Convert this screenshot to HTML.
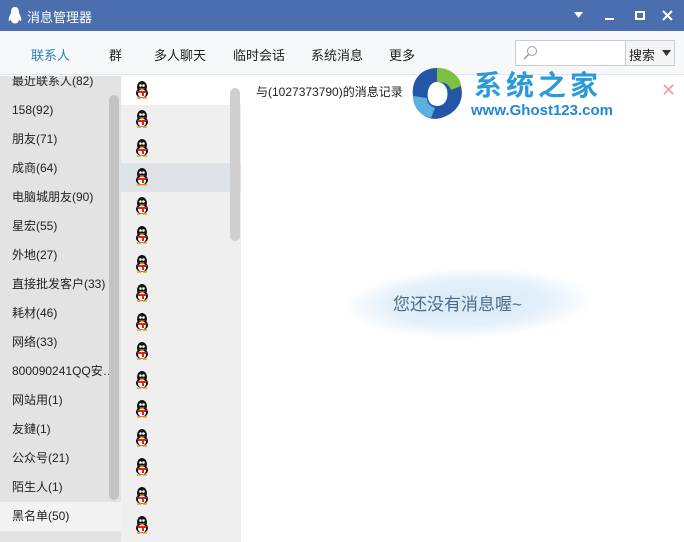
<!DOCTYPE html>
<html><head><meta charset="utf-8"><style>
*{margin:0;padding:0;box-sizing:border-box}
body{width:684px;height:542px;overflow:hidden;background:#fff;font-family:"Liberation Sans","Noto Sans CJK SC",sans-serif;font-size:12px;color:#222;position:relative}
.abs{position:absolute}
#title{left:0;top:0;width:684px;height:31px;background:#4b6eaf;color:#fff}
#tb{left:0;top:31px;width:684px;height:44px;background:#f7f8fa;border-bottom:1px solid #e2e4e8}
.tab{position:absolute;top:45px;font-size:13px;color:#222}
#left{left:0;top:76px;width:121px;height:466px;background:#e3e3e3;overflow:hidden}
.lr{position:absolute;left:0;width:121px;height:29px;line-height:29px;padding-left:12px;padding-right:4px;font-size:12px;white-space:nowrap;overflow:hidden;text-overflow:ellipsis}
#mid{left:121px;top:76px;width:120px;height:466px;background:#efefef;overflow:hidden}
.mr{position:absolute;left:0;width:120px;height:29px}
</style></head><body>
<div id="title" class="abs">
 <svg class="abs" style="left:8px;top:7px" width="14" height="17" viewBox="0 0 14 17"><path d="M7 0C3.5 0 3 3 3 6 1.5 9 0 12 1 14 2 14 2.5 13 3 12.5 3 15 5 16.5 7 16.5 9 16.5 11 15 11 12.5 11.5 13 12 14 13 14 14 12 12.5 9 11 6 11 3 10.5 0 7 0Z" fill="#fff"/></svg>
 <div class="abs" style="left:27px;top:7px;font-size:13px">消息管理器</div>
 <svg class="abs" style="left:574px;top:12px" width="9" height="7"><path d="M0 0H9L4.5 6Z" fill="#fff"/></svg>
 <div class="abs" style="left:605px;top:18px;width:9px;height:2px;background:#fff"></div>
 <div class="abs" style="left:635px;top:11px;width:10px;height:9px;border:2px solid #fff"></div>
 <svg class="abs" style="left:662px;top:10px" width="11" height="11"><path d="M1 1L10 10M10 1L1 10" stroke="#fff" stroke-width="2"/></svg>
</div>
<div id="tb" class="abs"></div>
<div class="tab" style="left:31px;color:#2a80c4">联系人</div>
<div class="tab" style="left:109px">群</div>
<div class="tab" style="left:154px">多人聊天</div>
<div class="tab" style="left:233px">临时会话</div>
<div class="tab" style="left:311px">系统消息</div>
<div class="tab" style="left:389px">更多</div>
<div class="abs" style="left:515px;top:40px;width:160px;height:26px;border:1px solid #c9ccd2;background:#fff"></div>
<div class="abs" style="left:625px;top:40px;width:50px;height:26px;border:1px solid #c9ccd2;background:#f4f4f4"></div>
<svg class="abs" style="left:522px;top:45px" width="16" height="16"><circle cx="10" cy="6" r="4.5" stroke="#999" fill="none"/><path d="M7 9L2 14" stroke="#999" stroke-width="1.5"/></svg>
<div class="abs" style="left:629px;top:45px;font-size:13px">搜索</div>
<svg class="abs" style="left:662px;top:50px" width="9" height="6"><path d="M0 0H9L4.5 6Z" fill="#333"/></svg>
<div id="left" class="abs">
 <div class="lr" style="top:-9px">最近联系人(82)</div>
 <div class="lr" style="top:20px">158(92)</div>
 <div class="lr" style="top:49px">朋友(71)</div>
 <div class="lr" style="top:78px">成商(64)</div>
 <div class="lr" style="top:107px">电脑城朋友(90)</div>
 <div class="lr" style="top:136px">星宏(55)</div>
 <div class="lr" style="top:165px">外地(27)</div>
 <div class="lr" style="top:194px">直接批发客户(33)</div>
 <div class="lr" style="top:223px">耗材(46)</div>
 <div class="lr" style="top:252px">网络(33)</div>
 <div class="lr" style="top:281px">800090241QQ安全中心</div>
 <div class="lr" style="top:310px">网站用(1)</div>
 <div class="lr" style="top:339px">友鏈(1)</div>
 <div class="lr" style="top:368px">公众号(21)</div>
 <div class="lr" style="top:397px">陌生人(1)</div>
 <div class="lr" style="top:426px;background:#f3f3f3">黑名单(50)</div>
 <div class="abs" style="left:109px;top:19px;width:10px;height:405px;border-radius:5px;background:#c3c3c3"></div>
</div>
<div id="mid" class="abs">
 <div class="mr" style="top:0;background:#fff"></div>
 <div class="mr" style="top:87px;background:#dfe3e8"></div>
 <div class="abs" style="left:109px;top:12px;width:10px;height:153px;border-radius:5px;background:#cfcfcf"></div>
</div>
<svg width="0" height="0" style="position:absolute"><defs><g id="p"><ellipse cx="7" cy="6" rx="5" ry="6" fill="#111"/><ellipse cx="7" cy="12" rx="6" ry="5" fill="#111"/><ellipse cx="7" cy="12.5" rx="4" ry="4" fill="#fff"/><circle cx="5.5" cy="4.5" r="1.3" fill="#fff"/><circle cx="8.5" cy="4.5" r="1.3" fill="#fff"/><path d="M4 7.5H10L7 9.5Z" fill="#f0a000"/><path d="M2 10H12L11 12H9V15H7V12H3Z" fill="#d22"/><path d="M2 17H6M8 17H12" stroke="#e8a000" stroke-width="1.5"/></g></defs></svg>
<div id="pens"></div>
<script>
var h='';for(var i=0;i<16;i++){h+='<svg class="abs" style="left:135px;top:'+(81+i*29)+'px" width="14" height="18" viewBox="0 0 14 18"><use href="#p"/></svg>';}
document.getElementById('pens').innerHTML=h;
</script>
<div class="abs" style="left:256px;top:83px;font-size:12px">与(1027373790)的消息记录</div>
<svg class="abs" style="left:407px;top:64px" width="60" height="60" viewBox="0 0 60 60"><path d="M30 4C14 4 4 16 6 32 8 48 20 58 34 54 48 50 58 38 54 22 50 8 40 4 30 4ZM30 18C38 18 42 26 40 34 38 42 30 44 24 40 18 34 20 18 30 18Z" fill="#2456a8"/><path d="M30 4C42 4 54 12 54 22L44 26C42 20 38 18 30 18Z" fill="#7cc142"/><path d="M6 32C6 44 14 52 24 54L28 44C22 42 20 38 20 34Z" fill="#5bb0e0"/></svg>
<div class="abs" style="left:474px;top:64px;font-size:28px;color:#2a9ad8;letter-spacing:4px;font-weight:bold">系统之家</div>
<div class="abs" style="left:471px;top:102px;font-size:15px;color:#1d8ad0;font-weight:bold">www.Ghost123.com</div>
<div class="abs" style="left:661px;top:80px;font-size:18px;color:#e8a0a0">✕</div>
<div class="abs" style="left:345px;top:268px;width:245px;height:70px;background:radial-gradient(ellipse at center,#d6e9f7 0%,#e3f0fa 45%,rgba(255,255,255,0) 72%);transform:skewX(-20deg)"></div>
<div class="abs" style="left:393px;top:290px;font-size:17px;color:#4a6c8c">您还没有消息喔~</div>
</body></html>
